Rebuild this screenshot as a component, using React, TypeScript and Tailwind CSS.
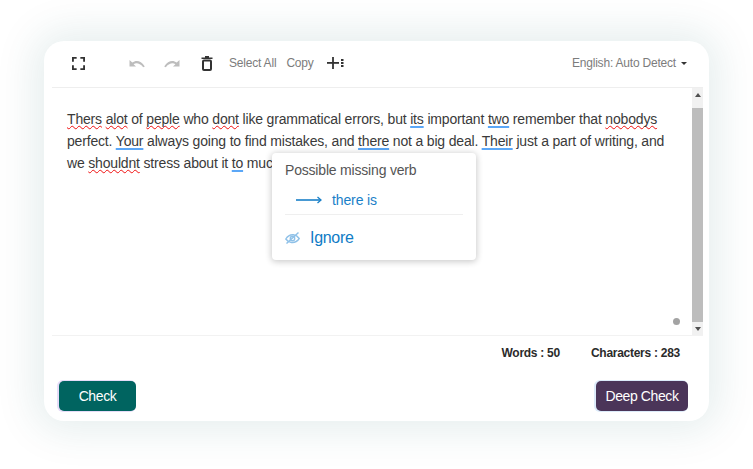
import React from "react";

const R = ({ children }: { children: React.ReactNode }) => (
  <span className="underline decoration-wavy decoration-[#f01010] decoration-1 underline-offset-[1px] [text-decoration-skip-ink:none]">{children}</span>
);
const B = ({ children }: { children: React.ReactNode }) => (
  <span className="underline decoration-2 decoration-[#5ba7f7] underline-offset-[2px] [text-decoration-skip-ink:none]">{children}</span>
);

export default function App() {
  return (
    <div className="w-[753px] h-[469px] bg-white pt-[41px] pl-[44px] overflow-hidden font-['Liberation_Sans',Arial,sans-serif]">
      <div className="w-[665px] h-[380px] bg-white rounded-[20px] shadow-[0_0_40px_10px_rgba(0,90,90,0.10)] flex flex-col pl-[8px]">
        {/* toolbar */}
        <div className="h-[47px] shrink-0 flex items-center border-b border-[#eeeeee] mr-[6px] pb-[2px] text-[12px] tracking-[-0.2px] text-[#7c7c7c]">
          <svg className="ml-[20px]" width="13" height="13" viewBox="0 0 14 14" fill="none" stroke="#333" strokeWidth="2">
            <path d="M1 5V1h4M9 1h4v4M13 9v4H9M5 13H1V9" />
          </svg>
          <svg className="ml-[44px]" width="16" height="9" viewBox="0 0 16 9" fill="#bdbdbd">
            <path d="M0.5 1v6.5H7L4.6 5.2C6.9 3.6 10.6 3.8 14.2 8.2L15.8 7.400C12 1.400 7 0.800 3.300 3.500z" />
          </svg>
          <svg className="ml-[19px]" width="16" height="9" viewBox="0 0 16 9" fill="#bdbdbd">
            <path d="M15.500 1v6.500H9L11.400 5.200C9.100 3.600 5.400 3.800 1.800 8.200L0.200 7.400C4 1.400 9 0.800 12.700 3.500z" />
          </svg>
          <svg className="ml-[21px]" width="12" height="15" viewBox="0 0 12 15" fill="none">
            <path d="M0.500 1.500h11v1.500H0.500z M4 0h4v1.500H4z" fill="#333" />
            <rect x="2" y="4.500" width="8" height="9.500" rx="1" stroke="#333" strokeWidth="2" />
          </svg>
          <span className="ml-[16px]">Select All</span>
          <span className="ml-[10px]">Copy</span>
          <svg className="ml-[13px]" width="17" height="12" viewBox="0 0 17 12" fill="#333">
            <rect x="0" y="5" width="12" height="1.800" />
            <rect x="5.100" y="0" width="1.800" height="12" />
            <rect x="14" y="2" width="2.500" height="2" />
            <rect x="14" y="5" width="2.500" height="2" />
            <rect x="14" y="8" width="2.500" height="2" />
          </svg>
          <div className="ml-auto mr-[16px] flex items-center gap-[5px]">
            <span>English: Auto Detect</span>
            <span className="w-0 h-0 border-x-[3px] border-x-transparent border-t-[3px] border-t-[#333]" />
          </div>
        </div>
        {/* editor */}
        <div className="relative h-[248px] shrink-0 flex mr-[6px] border-b border-[#f2f2f2]">
          <div className="flex-1 min-w-0 pl-[15px] pt-[20px] text-[14px] tracking-[-0.175px] leading-[22px] text-[#3a3a3a] whitespace-nowrap">
            <div><R>Thers</R> <R>alot</R> of <R>peple</R> who <R>dont</R> like grammatical errors, but <B>its</B> important <B>two</B> remember that <R>nobodys</R></div>
            <div>perfect. <B>Your</B> always going to find mistakes, and <B>there</B> not a big deal. <B>Their</B> just a part of writing, and</div>
            <div>we <R>shouldnt</R> stress about it <B>to</B> much.</div>
          </div>
          <div className="w-[11px] flex flex-col bg-[#f1f1f1] shrink-0">
            <div className="h-[20px] flex items-start justify-center pt-[5px]">
              <span className="w-0 h-0 border-x-[3px] border-x-transparent border-b-[4px] border-b-[#505050]" />
            </div>
            <div className="h-[214px] bg-[#bdbdbd]" />
            <div className="flex-1 flex items-end justify-center pb-[4px]">
              <span className="w-0 h-0 border-x-[3px] border-x-transparent border-t-[4px] border-t-[#505050]" />
            </div>
          </div>
          <span className="absolute left-[621px] top-[230px] w-[7px] h-[7px] rounded-full bg-[#a3a3a3]" />
          {/* popover */}
          <div className="absolute left-[220px] top-[65px] w-[204px] h-[107px] bg-white rounded-[4px] shadow-[0_1px_6px_1px_rgba(0,0,0,0.2)] px-[13px]">
            <div className="pt-[8px] text-[14px] tracking-[-0.19px] leading-[18px] text-[#555]">Possible missing verb</div>
            <div className="mt-[3px] h-[33px] pt-[4px] flex items-center border-b border-[#efefef] text-[14px] tracking-[-0.12px] text-[#1a80c8]">
              <svg className="ml-[11px]" width="26" height="8" viewBox="0 0 26 8" fill="none" stroke="#1a80c8">
                <path d="M0 4h25" strokeWidth="1.600" />
                <path d="M21.500 1l3.500 3-3.500 3" strokeWidth="1.300" />
              </svg>
              <span className="ml-[10px]">there is</span>
            </div>
            <div className="h-[46px] flex items-center text-[16px] tracking-[-0.3px] text-[#0f7cc6]">
              <svg width="15" height="14" viewBox="0 0 15 14" fill="none" stroke="#8fc1e8" strokeWidth="1.400">
                <path d="M0.800 8C3 4.500 6 3.500 8.500 3.800C10.800 4.100 12.800 5.500 14.200 7.500C12 10.800 9 11.800 6.500 11.500C4.200 11.200 2.200 10 0.800 8z" />
                <circle cx="7.500" cy="7.500" r="2.200" />
                <path d="M1.500 12.500L13.500 1.500" />
              </svg>
              <span className="ml-[10px]">Ignore</span>
            </div>
          </div>
        </div>
        {/* counts */}
        <div className="h-[34px] shrink-0 flex items-center justify-end pr-[29px] gap-[31px] text-[12px] tracking-[-0.27px] font-bold text-[#2b2b2b]">
          <span>Words : 50</span>
          <span>Characters : 283</span>
        </div>
        {/* buttons */}
        <div className="flex justify-between pt-[11px] pl-[7px] pr-[21px]">
          <button className="w-[77px] h-[30px] rounded-[5px] bg-[#006460] text-white text-[14px] tracking-[-0.4px] shadow-[-1px_0_0_1px_#e6dcf8]">Check</button>
          <button className="w-[92px] h-[30px] rounded-[5px] bg-[#4b3559] text-white text-[14px] tracking-[-0.4px] shadow-[-1px_0_0_1px_#dcebfa]">Deep Check</button>
        </div>
      </div>
    </div>
  );
}
